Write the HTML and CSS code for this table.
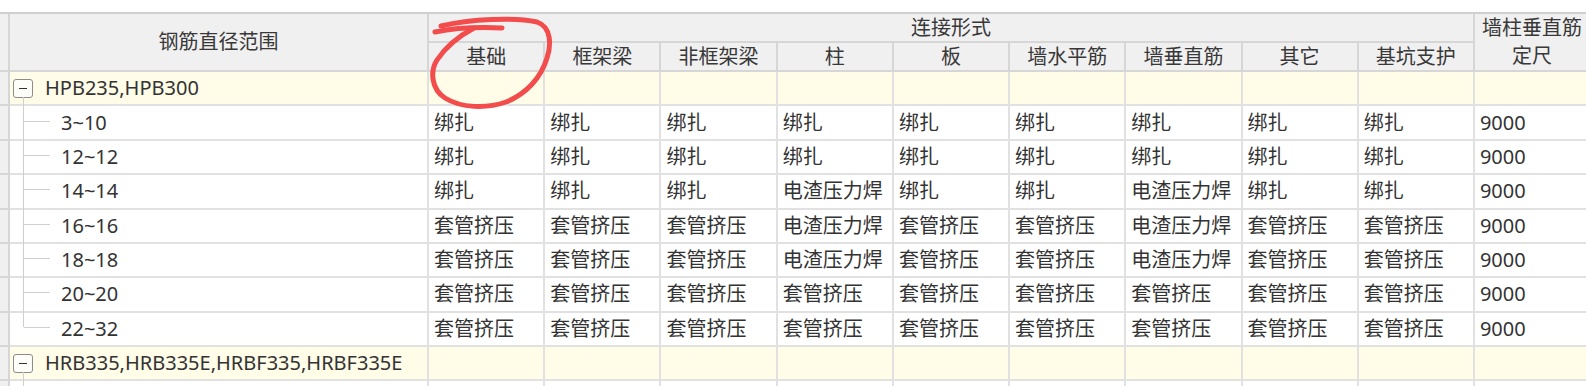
FILE: index.html
```html
<!DOCTYPE html>
<html lang="zh-CN">
<head>
<meta charset="utf-8">
<title>连接形式</title>
<link rel="stylesheet" href="styles.css">
</head>
<body>
<table class="grid">
  <colgroup>
    <col class="c-gutter">
    <col class="c-range">
    <col class="c-conn"><col class="c-conn"><col class="c-conn"><col class="c-conn"><col class="c-conn"><col class="c-conn"><col class="c-conn"><col class="c-conn"><col class="c-conn">
    <col class="c-len">
  </colgroup>
  <thead>
    <tr class="h1">
      <th class="gutter" rowspan="2"></th>
      <th rowspan="2">钢筋直径范围</th>
      <th colspan="9">连接形式</th>
      <th rowspan="2" class="two">墙柱垂直筋<br>定尺</th>
    </tr>
    <tr class="h2">
      <th>基础</th><th>框架梁</th><th>非框架梁</th><th>柱</th><th>板</th><th>墙水平筋</th><th>墙垂直筋</th><th>其它</th><th>基坑支护</th>
    </tr>
  </thead>
  <tbody>
    <tr class="group">
      <td class="gutter"></td>
      <td class="range"><span class="toggle"></span>HPB235,HPB300</td>
      <td></td><td></td><td></td><td></td><td></td><td></td><td></td><td></td><td></td><td></td>
    </tr>
    <tr class="node">
      <td class="gutter"></td><td class="range">3~10</td>
      <td>绑扎</td><td>绑扎</td><td>绑扎</td><td>绑扎</td><td>绑扎</td><td>绑扎</td><td>绑扎</td><td>绑扎</td><td>绑扎</td><td>9000</td>
    </tr>
    <tr class="node">
      <td class="gutter"></td><td class="range">12~12</td>
      <td>绑扎</td><td>绑扎</td><td>绑扎</td><td>绑扎</td><td>绑扎</td><td>绑扎</td><td>绑扎</td><td>绑扎</td><td>绑扎</td><td>9000</td>
    </tr>
    <tr class="node">
      <td class="gutter"></td><td class="range">14~14</td>
      <td>绑扎</td><td>绑扎</td><td>绑扎</td><td>电渣压力焊</td><td>绑扎</td><td>绑扎</td><td>电渣压力焊</td><td>绑扎</td><td>绑扎</td><td>9000</td>
    </tr>
    <tr class="node">
      <td class="gutter"></td><td class="range">16~16</td>
      <td>套管挤压</td><td>套管挤压</td><td>套管挤压</td><td>电渣压力焊</td><td>套管挤压</td><td>套管挤压</td><td>电渣压力焊</td><td>套管挤压</td><td>套管挤压</td><td>9000</td>
    </tr>
    <tr class="node">
      <td class="gutter"></td><td class="range">18~18</td>
      <td>套管挤压</td><td>套管挤压</td><td>套管挤压</td><td>电渣压力焊</td><td>套管挤压</td><td>套管挤压</td><td>电渣压力焊</td><td>套管挤压</td><td>套管挤压</td><td>9000</td>
    </tr>
    <tr class="node">
      <td class="gutter"></td><td class="range">20~20</td>
      <td>套管挤压</td><td>套管挤压</td><td>套管挤压</td><td>套管挤压</td><td>套管挤压</td><td>套管挤压</td><td>套管挤压</td><td>套管挤压</td><td>套管挤压</td><td>9000</td>
    </tr>
    <tr class="node last">
      <td class="gutter"></td><td class="range">22~32</td>
      <td>套管挤压</td><td>套管挤压</td><td>套管挤压</td><td>套管挤压</td><td>套管挤压</td><td>套管挤压</td><td>套管挤压</td><td>套管挤压</td><td>套管挤压</td><td>9000</td>
    </tr>
    <tr class="group">
      <td class="gutter"></td>
      <td class="range"><span class="toggle"></span>HRB335,HRB335E,HRBF335,HRBF335E</td>
      <td></td><td></td><td></td><td></td><td></td><td></td><td></td><td></td><td></td><td></td>
    </tr>
    <tr class="node">
      <td class="gutter"></td><td class="range"></td>
      <td></td><td></td><td></td><td></td><td></td><td></td><td></td><td></td><td></td><td></td>
    </tr>
  </tbody>
</table>
<svg class="mark" width="1586" height="386" viewBox="0 0 1586 386">
  <path d="M435 32 C455 28 480 27 502 28" />
  <path d="M441 26 C470 19 515 17 537 22 C552 27 551 46 547 58 C541 78 526 94 506 102 C486 109 461 108 445 98 C431 89 430 71 437 60 C445 48 459 36 474 28" />
</svg>
</body>
</html>
```
FILE: styles.css
```css
html, body {
  margin: 0;
  padding: 0;
  background: #ffffff;
  overflow: hidden;
}

body {
  font-family: "Noto Sans", "Noto Sans CJK SC", sans-serif;
  font-size: 20px;
  color: #333333;
  position: relative;
  width: 1586px;
  height: 386px;
}

.grid {
  margin-top: 12px;
  border-collapse: separate;
  border-spacing: 0;
  table-layout: fixed;
  width: 1591px;
  border-top: 2px solid #d0d0d0;
}

.c-gutter { width: 10px; }
.c-range { width: 419px; }
.c-conn { width: 116.2px; }
.c-len { width: 116px; }

th {
  background: #f0f0f0;
  font-weight: normal;
  color: #383838;
  border-right: 2px solid #d6d6d6;
  border-bottom: 2px solid #d6d6d6;
  padding: 0;
  text-align: center;
  line-height: 24px;
  white-space: nowrap;
  overflow: hidden;
  vertical-align: middle;
}

th.two {
  line-height: 28px;
}

.h1, .h2 {
  height: 28px;
}

td {
  border-right: 2px solid #e1e1e1;
  border-bottom: 2px solid #e1e1e1;
  padding: 0 0 0 5px;
  line-height: 24px;
  white-space: nowrap;
  overflow: hidden;
  vertical-align: middle;
}

tbody tr {
  height: 34.375px;
}

.gutter {
  background: #f0f0f0;
  padding: 0;
  border-right-color: #d6d6d6;
  border-bottom-color: #d6d6d6;
}

.group td {
  background: #fffce8;
}

.group td.gutter {
  background: #f0f0f0;
}

td.range {
  position: relative;
  overflow: visible;
}

.group .range {
  padding-left: 3px;
}

.node .range {
  padding-left: 51px;
}

.toggle {
  display: inline-block;
  position: relative;
  box-sizing: border-box;
  width: 20px;
  height: 19px;
  border: 1px solid #8c8c8c;
  border-radius: 3px;
  background: #fdfdf9;
  margin-right: 12px;
  vertical-align: -3px;
}

.toggle::before {
  content: "";
  position: absolute;
  left: 5px;
  top: 8px;
  width: 8px;
  height: 1px;
  background: #333333;
}

.group .range::after {
  content: "";
  position: absolute;
  left: 13px;
  top: calc(50% + 9px);
  bottom: -2px;
  border-left: 1px solid #cfcfcf;
}

.node .range::before {
  content: "";
  position: absolute;
  left: 13px;
  top: 0;
  bottom: -2px;
  border-left: 1px solid #cfcfcf;
}

.node.last .range::before {
  bottom: calc(50% + 2px);
}

.node .range::after {
  content: "";
  position: absolute;
  left: 14px;
  width: 26px;
  top: calc(50% - 2px);
  border-top: 1px solid #cfcfcf;
}

.mark {
  position: absolute;
  left: 0;
  top: 0;
  pointer-events: none;
  fill: none;
  stroke: #f24c4c;
  stroke-width: 5;
  stroke-linecap: round;
  stroke-linejoin: round;
}
```
